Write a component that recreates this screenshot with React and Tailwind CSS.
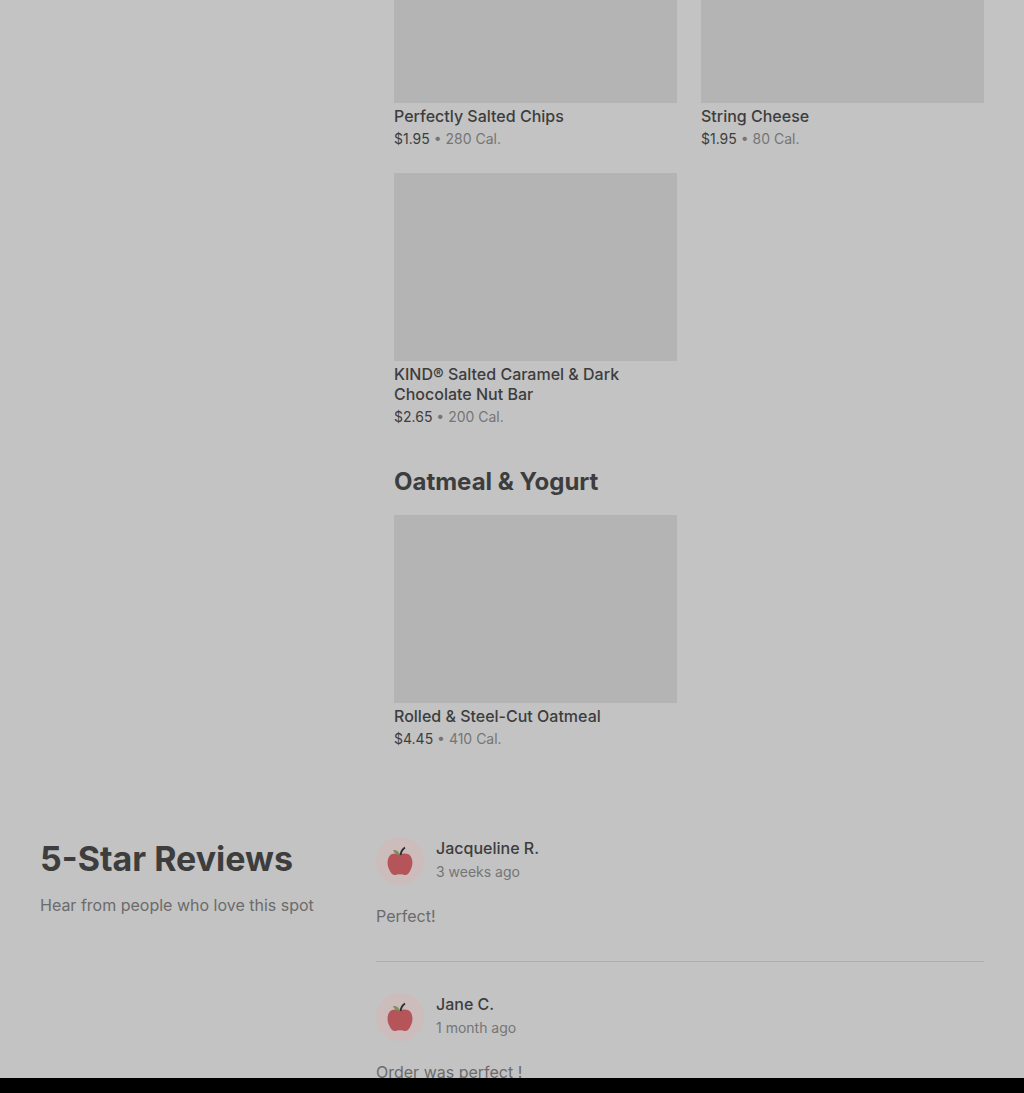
import React from "react";

const font = { fontFamily: '"Inter", "Liberation Sans", sans-serif' };

const AppleIcon = () => (
  <svg width="28" height="30" viewBox="0 0 28 30">
    <path d="M14 9C11 7 6 7 3.500 10C1 13.500 1 19 3 23C4.500 27 7 29.500 9.500 29C11.500 28.500 12.500 28 14 28.500C15.500 28 16.500 28.500 18.500 29C21 29.500 23.500 27 25 23C27 19 27 13.500 24.500 10C22 7 17 7 14 9Z" fill="#b5555a" />
    <path d="M14 9C13 5 10 3.500 7 4C8 7 10.500 9 14 9Z" fill="#7d8f5c" />
    <path d="M14.500 9C15 6 16.500 3 19 1.500" fill="none" stroke="#2f2f2f" strokeWidth="2" />
  </svg>
);

const Item = ({ name, price, cal, imageHeight = "h-[188px]" }) => (
  <div>
    <div className={`${imageHeight} bg-[#b4b4b4]`} />
    <div className="mt-[3px] text-[16px] leading-[20px] font-medium text-[#3d3d3d]">{name}</div>
    <div className="mt-[3px] text-[14px] leading-[20px] text-[#3d3d3d]">
      {price} <span className="text-[#757575]">• {cal} Cal.</span>
    </div>
  </div>
);

const Review = ({ name, when, text }) => (
  <div>
    <div className="flex gap-3">
      <div className="w-12 h-12 rounded-full bg-[#cdbcbc] flex items-center justify-center">
        <AppleIcon />
      </div>
      <div>
        <div className="text-[16px] leading-[22px] font-medium text-[#3d3d3d]">{name}</div>
        <div className="mt-[3px] text-[14px] leading-[20px] text-[#757575]">{when}</div>
      </div>
    </div>
    <div className="mt-5 text-[16px] leading-[22px] text-[#6b6b6b]">{text}</div>
  </div>
);

export default function App() {
  return (
    <div className="h-[1093px] bg-black overflow-hidden" style={font}>
      <div className="h-[1078px] bg-[#c3c3c3] overflow-hidden">
        <div className="pl-[394px] pr-10">
          <div className="grid grid-cols-2 gap-x-6 gap-y-6">
            <Item name="Perfectly Salted Chips" price="$1.95" cal="280" imageHeight="h-[103px]" />
            <Item name="String Cheese" price="$1.95" cal="80" imageHeight="h-[103px]" />
            <Item name="KIND® Salted Caramel & Dark Chocolate Nut Bar" price="$2.65" cal="200" />
          </div>
          <h2 className="mt-[40px] text-[24px] leading-[30px] font-bold text-[#3d3d3d]">Oatmeal &amp; Yogurt</h2>
          <div className="mt-[18px] grid grid-cols-2 gap-x-6">
            <Item name="Rolled & Steel-Cut Oatmeal" price="$4.45" cal="410" />
          </div>
        </div>
        <div className="mt-[88px] flex pl-10 pr-10">
          <div className="w-[336px]">
            <h2 className="text-[34px] leading-[44px] font-bold text-[#3d3d3d]">5-Star Reviews</h2>
            <p className="mt-3 text-[16px] leading-[24px] text-[#6b6b6b]">Hear from people who love this spot</p>
          </div>
          <div className="flex-1">
            <Review name="Jacqueline R." when="3 weeks ago" text="Perfect!" />
            <div className="mt-[34px] mb-[31px] h-px bg-[#adadad]" />
            <Review name="Jane C." when="1 month ago" text="Order was perfect !" />
          </div>
        </div>
      </div>
    </div>
  );
}
